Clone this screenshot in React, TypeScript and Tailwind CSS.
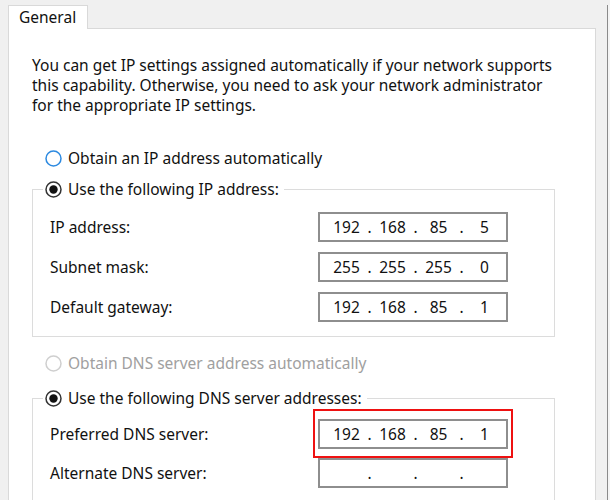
const Radio = ({ state }: { state: "checked" | "focus" | "disabled" }) => {
    if (state === "checked") {
        return <svg width="17" height="17" viewBox="0 0 17 17" className="shrink-0">
            <circle cx="8.5" cy="8.5" r="7.5" fill="white" stroke="#333333" strokeWidth="1.5" />
            <circle cx="8.5" cy="8.5" r="4.2" fill="#111111" />
        </svg>
    }
    const color = state === "focus" ? "#2d8ae0" : "#cfcfcf"
    return <svg width="17" height="17" viewBox="0 0 17 17" className="shrink-0">
        <circle cx="8.5" cy="8.5" r="7.5" fill="white" stroke={color} strokeWidth="1.5" />
    </svg>
}

const IpBox = ({ parts }: { parts: string[] }) => {
    return <div className='flex h-[30px] w-[190px] items-center border-2 border-[#8e8e8e] bg-white pl-[8px]'>
        <span className='w-[37px] text-center'>{parts[0]}</span>
        <span className='w-[9px] text-center'>.</span>
        <span className='w-[37px] text-center'>{parts[1]}</span>
        <span className='w-[9px] text-center'>.</span>
        <span className='w-[37px] text-center'>{parts[2]}</span>
        <span className='w-[9px] text-center'>.</span>
        <span className='w-[37px] text-center'>{parts[3]}</span>
    </div>
}

const Row = ({ label, children }: { label: string, children: React.ReactNode }) => {
    return <div className='grid grid-cols-[268px_190px] items-center pl-[17px]'>
        <span>{label}</span>
        {children}
    </div>
}

export default function App() {
    return <div className="flex h-[500px] w-[610px] overflow-hidden bg-[#f0f0f0] pt-[5px] pl-[8px] text-[15.5px] text-[#111] font-['Noto_Sans',sans-serif]">
        <div className='flex w-[588px] flex-col'>
            {/* tab */}
            <div className='relative z-10 -mb-px flex h-[31px] w-[80px] items-center border border-b-0 border-[#d9d9d9] bg-white pl-[10px]'>
                General
            </div>
            <div className='h-[600px] border border-[#d9d9d9] bg-white px-[23px] pt-[26px]'>
                <p className='leading-[20px] whitespace-nowrap'>
                    You can get IP settings assigned automatically if your network supports<br />
                    this capability. Otherwise, you need to ask your network administrator<br />
                    for the appropriate IP settings.
                </p>

                <div className='mt-[31px] flex h-[24px] items-center gap-[6px] pl-[13px]'>
                    <Radio state="focus" />
                    <span>Obtain an IP address automatically</span>
                </div>

                <fieldset className='mt-[7px] mr-[17px] border border-[#dcdcdc] pb-[14px]'>
                    <legend className='ml-[10px] flex h-[24px] items-center gap-[6px] px-[2px]'>
                        <Radio state="checked" />
                        <span className='pr-[3px]'>Use the following IP address:</span>
                    </legend>
                    <div className='mt-[11px] flex flex-col gap-[10px]'>
                        <Row label="IP address:"><IpBox parts={["192", "168", "85", "5"]} /></Row>
                        <Row label="Subnet mask:"><IpBox parts={["255", "255", "255", "0"]} /></Row>
                        <Row label="Default gateway:"><IpBox parts={["192", "168", "85", "1"]} /></Row>
                    </div>
                </fieldset>

                <div className='mt-[14px] flex h-[24px] items-center gap-[6px] pl-[13px] text-[#a0a0a0]'>
                    <Radio state="disabled" />
                    <span>Obtain DNS server address automatically</span>
                </div>

                <fieldset className='mt-[11px] mr-[17px] border border-[#dcdcdc] pb-[14px]'>
                    <legend className='ml-[10px] flex h-[24px] items-center gap-[6px] px-[2px]'>
                        <Radio state="checked" />
                        <span className='pr-[3px]'>Use the following DNS server addresses:</span>
                    </legend>
                    <div className='mt-[9px] flex flex-col gap-[9px]'>
                        <Row label="Preferred DNS server:">
                            <div className='relative'>
                                <IpBox parts={["192", "168", "85", "1"]} />
                                <div className='absolute -top-[10px] -left-[5px] h-[49px] w-[200px] border-2 border-[#ee1111]'></div>
                            </div>
                        </Row>
                        <Row label="Alternate DNS server:"><IpBox parts={["", "", "", ""]} /></Row>
                    </div>
                </fieldset>
            </div>
        </div>
        <div className='w-[11px]'></div>
        <div className='w-px bg-[#8a8a8a]'></div>
        <div className='w-[2px] bg-[#f4f4f4]'></div>
    </div>
}
